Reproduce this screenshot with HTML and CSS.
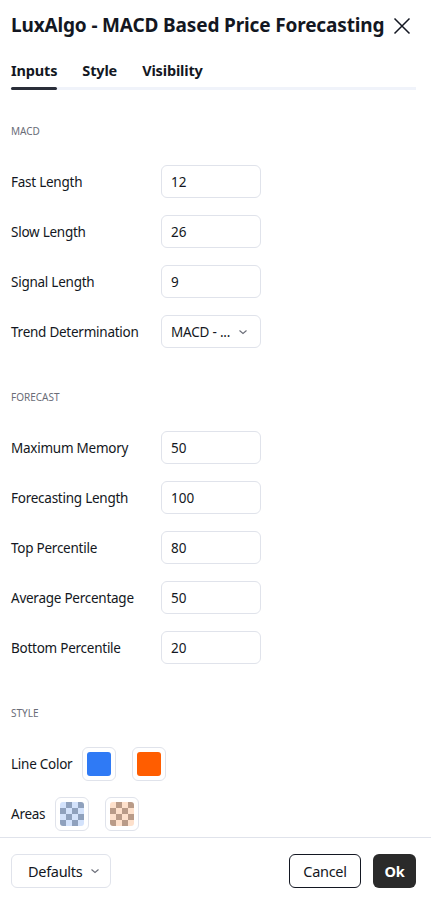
FILE: index.html
```html
<!DOCTYPE html>
<html>
<head>
<meta charset="utf-8">
<link rel="stylesheet" href="styles.css">
</head>
<body>
<div class="dialog">
  <div class="header">
    <div class="title">LuxAlgo - MACD Based Price Forecasting</div>
    <svg class="close" width="18" height="18" viewBox="0 0 18 18"><path d="M1.5 1.5L16.5 16.5M16.5 1.5L1.5 16.5" stroke="#131722" stroke-width="1.5" fill="none"/></svg>
  </div>
  <div class="tabs">
    <div class="tab active">Inputs</div>
    <div class="tab">Style</div>
    <div class="tab">Visibility</div>
  </div>
  <div class="content">
    <div class="section">MACD</div>
    <div class="row"><div class="label">Fast Length</div><div class="field">12</div></div>
    <div class="row"><div class="label">Slow Length</div><div class="field">26</div></div>
    <div class="row"><div class="label">Signal Length</div><div class="field">9</div></div>
    <div class="row"><div class="label">Trend Determination</div><div class="field select"><span>MACD - ...</span><svg width="10" height="6" viewBox="0 0 10 6"><path d="M1.5 1.5l3.5 3 3.5-3" stroke="#6a6d78" stroke-width="1.1" fill="none"/></svg></div></div>
    <div class="section">FORECAST</div>
    <div class="row"><div class="label">Maximum Memory</div><div class="field">50</div></div>
    <div class="row"><div class="label">Forecasting Length</div><div class="field">100</div></div>
    <div class="row"><div class="label">Top Percentile</div><div class="field">80</div></div>
    <div class="row"><div class="label">Average Percentage</div><div class="field">50</div></div>
    <div class="row"><div class="label">Bottom Percentile</div><div class="field">20</div></div>
    <div class="section">STYLE</div>
    <div class="row inline"><div class="label">Line Color</div>
      <div class="swatch"><div class="fill blue"></div></div>
      <div class="swatch"><div class="fill orange"></div></div>
    </div>
    <div class="row inline"><div class="label">Areas</div>
      <div class="swatch"><div class="fill check-blue"></div></div>
      <div class="swatch"><div class="fill check-orange"></div></div>
    </div>
  </div>
  <div class="footer">
    <div class="btn defaults"><span>Defaults</span><svg width="10" height="6" viewBox="0 0 10 6"><path d="M1.5 1.5l3.5 3 3.5-3" stroke="#6a6d78" stroke-width="1.1" fill="none"/></svg></div>
    <div class="right">
      <div class="btn cancel">Cancel</div>
      <div class="btn ok">Ok</div>
    </div>
  </div>
</div>
</body>
</html>
```
FILE: styles.css
```css
* { box-sizing: border-box; }
html, body { margin: 0; padding: 0; background: #fff; }
body { font-family: "Noto Sans", "Open Sans", sans-serif; color: #131722; }
.dialog { width: 431px; height: 900px; display: flex; flex-direction: column; overflow: hidden; }
.header { height: 50px; display: flex; align-items: center; justify-content: space-between; padding: 0 20px 0 11px; }
.title { font-size: 19px; font-weight: 700; letter-spacing: -0.15px; }
.close { display: block; margin-top: 1px; }
.tabs { height: 40px; margin: 0 15px 0 11px; display: flex; gap: 25px; align-items: flex-end; border-bottom: 3px solid #f0f3fa; }
.tab { font-size: 14.5px; font-weight: 700; letter-spacing: -0.15px; height: 27px; line-height: 20px; position: relative; }
.tab.active::after { content: ""; position: absolute; left: 0; right: 0; bottom: -3px; height: 3px; background: #2a2e39; border-radius: 2px; }
.content { flex: 1; overflow: hidden; padding: 31px 11px 0 11px; }
.section { font-size: 10px; color: #6a6d78; height: 20px; line-height: 20px; margin-bottom: 15px; text-transform: uppercase; }
.row + .section { margin-top: 31px; }
.row { height: 50px; display: flex; align-items: center; padding-top: 1px; }
.label { font-size: 13.5px; letter-spacing: -0.25px; width: 150px; flex: none; }
.field { width: 100px; height: 33px; border: 1px solid #e0e3eb; border-radius: 6px; font-size: 13.5px; display: flex; align-items: center; padding: 0 9px; }
.select { justify-content: space-between; padding-right: 12px; letter-spacing: -0.2px; }
.row.inline .label { width: auto; margin-right: 10px; }
.swatch { width: 34px; height: 34px; border: 1px solid #e0e3eb; border-radius: 6px; display: flex; align-items: center; justify-content: center; margin-right: 16px; }
.fill { width: 24px; height: 24px; border-radius: 3px; }
.blue { background: #2f7af5; }
.orange { background: #ff5d00; }
.check-blue { background-color: #d3e2fb; background-image: conic-gradient(#8fa1bd 25%, transparent 0 50%, #8fa1bd 0 75%, transparent 0); background-size: 12px 12px; }
.check-orange { background-color: #fde0cb; background-image: conic-gradient(#b99b88 25%, transparent 0 50%, #b99b88 0 75%, transparent 0); background-size: 12px 12px; }
.footer { height: 63px; border-top: 1px solid #e0e3eb; display: flex; align-items: center; justify-content: space-between; padding: 4px 15px 0 11px; }
.btn { height: 34px; border-radius: 6px; font-size: 14.5px; letter-spacing: -0.3px; display: flex; align-items: center; justify-content: center; }
.defaults { width: 100px; border: 1px solid #e0e3eb; justify-content: space-between; padding: 0 10px 0 16px; }
.right { display: flex; gap: 12px; }
.cancel { width: 72px; border: 1px solid #131722; }
.ok { width: 43px; background: #2a2a2a; color: #fff; font-weight: 700; }
```
